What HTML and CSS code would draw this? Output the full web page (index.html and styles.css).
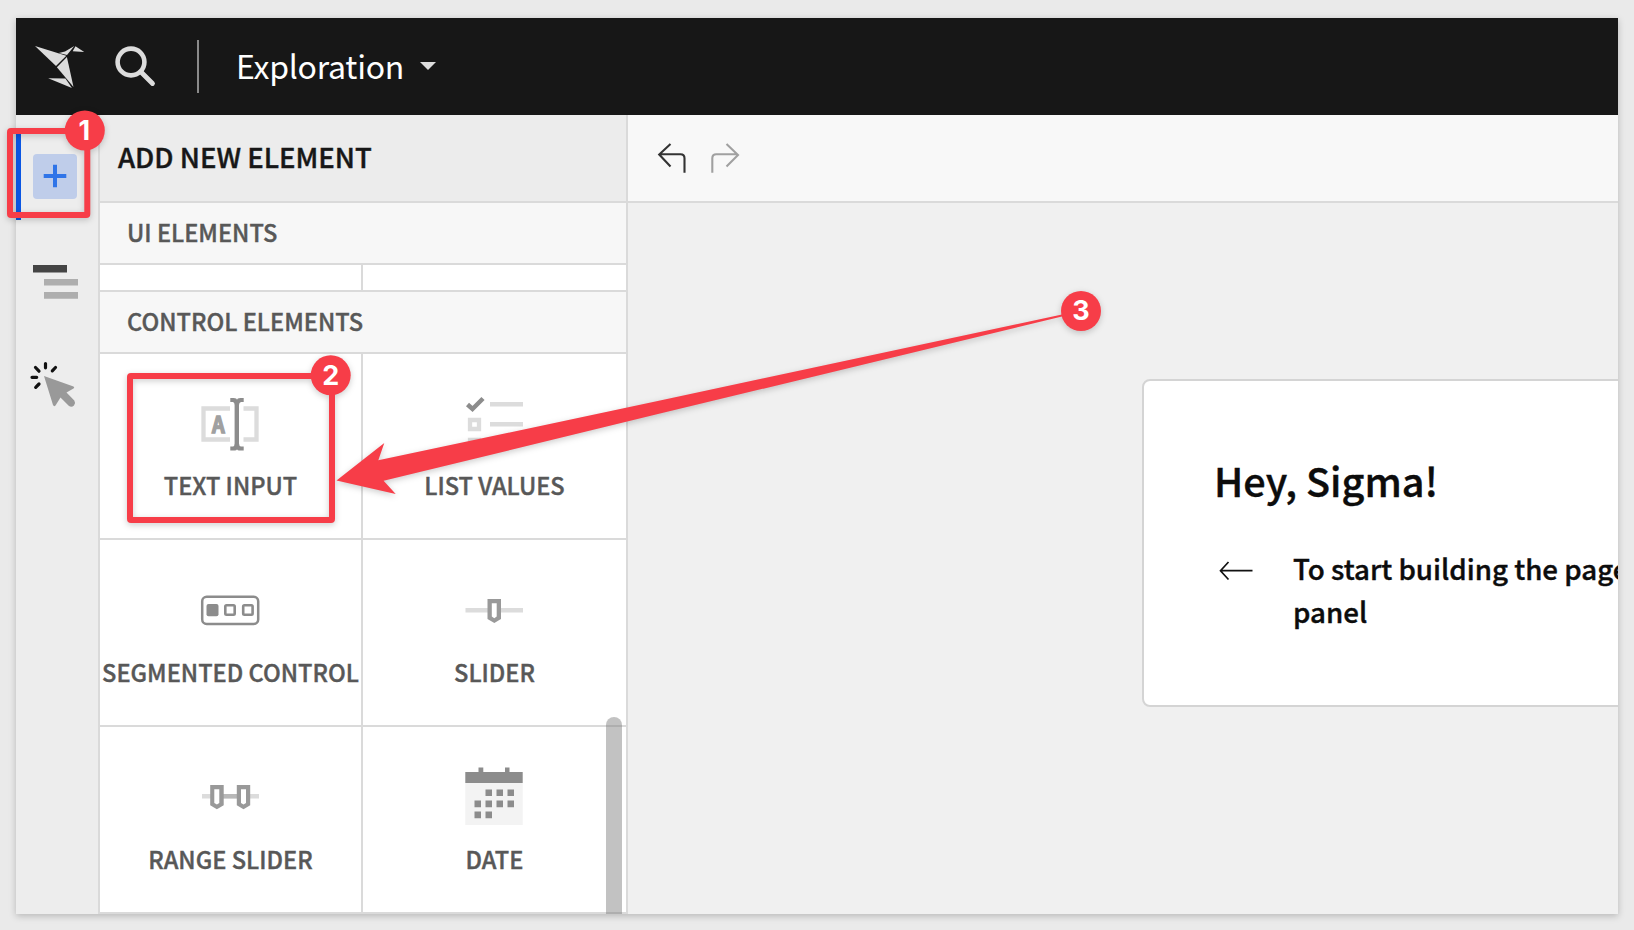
FILE: index.html
```html
<!DOCTYPE html>
<html lang="en">
<head>
<meta charset="utf-8">
<title>Exploration</title>
<link rel="stylesheet" href="styles.css">
</head>
<body>
<div class="window">
  <header class="topbar">
    <svg class="logo" width="52" height="46" viewBox="34 44 52 46" fill="#dcdcdc">
      <path d="M35 46L66.300 55.700 56 66z"/>
      <path d="M66.900 57L73.500 87 56.900 67.200z"/>
      <path d="M48.200 78.200L65.400 78.500 71.900 88z"/>
      <path d="M58.800 53L65 51.500 74.300 46 67 55z"/>
      <path d="M75.500 46.300L84.200 51.900 72.700 51.200z"/>
    </svg>
    <svg class="search" width="42" height="42" viewBox="114 45 42 42" fill="none" stroke="#dcdcdc" stroke-width="4.600">
      <circle cx="131" cy="62" r="13.400"/>
      <path d="M141 72L152.500 83.500" stroke-linecap="round" stroke-width="4.800"/>
    </svg>
    <span class="divider"></span>
    <span class="title">Exploration</span>
    <svg class="caret" width="16" height="8" viewBox="0 0 16 8"><path d="M0 0H16L8 8z" fill="#ddd"/></svg>
  </header>
  <div class="main">
    <nav class="rail">
      <div class="rail-active">
        <div class="plus"><svg width="24" height="24" viewBox="0 0 24 24"><path d="M12 .7V23.300M.7 12H23.300" stroke="#2f74e8" stroke-width="4"/></svg></div>
      </div>
      <svg class="outline" width="46" height="36" viewBox="0 0 46 36">
        <path d="M0 0H34V7.500H0z" fill="#444"/>
        <path d="M11 14H45V20.500H11zM11 27H45V33.700H11z" fill="#aeaeae"/>
      </svg>
      <svg class="pointer" width="48" height="48" viewBox="29 360 48 48">
        <path d="M44 376L73.500 386.500Q75 387.500 73.500 388.500L66.500 392.500 74.300 400.500Q76 403 74 405.500 71.500 407.800 69 406L60.500 397.500 55.500 405.500Q54 407 53 405z" fill="#999"/>
        <path d="M45.500 363.500V367.800M55.500 367.500L52.300 370.800M35.500 367.500L39 371.200M32 377.300H36.700M39 384L35.700 387.300" stroke="#111" stroke-width="3.200" stroke-linecap="round"/>
      </svg>
    </nav>
    <aside class="panel">
      <h2 class="panel-title">ADD NEW ELEMENT</h2>
      <h3 class="group">UI ELEMENTS</h3>
      <div class="stub"><span></span><span></span></div>
      <h3 class="group">CONTROL ELEMENTS</h3>
      <div class="grid">
        <div class="cell">
          <svg class="icon" width="60" height="60" viewBox="200 394 60 60">
            <path d="M230 408.500H203.500V439.500H230M243.500 408.500H256.500V439.500H243.500" fill="none" stroke="#dcdcdc" stroke-width="4.300"/>
            <path d="M230.300 398H233.500Q237 398 237 400 237 398 240.500 398H243.700V402H241Q239 402.500 239 405V443.500Q239 446 241 446.500H243.700V450.500H240.500Q237 450.500 237 449 237 450.500 233.500 450.500H230.300V446.500H233Q234.600 446 234.600 443.500V405Q234.600 402.500 233 402H230.300z" fill="#8c8c8c"/>
            <text class="glyph-a" transform="translate(218.300 432.500) scale(.86 1)" text-anchor="middle">A</text>
          </svg>
          <span class="label">TEXT INPUT</span>
        </div>
        <div class="cell">
          <svg class="icon" width="60" height="60" viewBox="464 394 60 60">
            <path d="M467.500 404.500L472.500 409 483 398.500" fill="none" stroke="#8c8c8c" stroke-width="4.500"/>
            <path d="M490 402H523V406.500H490zM490 422H523V426.500H490zM490 442H523V446.500H490z" fill="#dcdcdc"/>
            <path d="M470 420H479V429H470zM470 440H479V449H470z" fill="none" stroke="#dcdcdc" stroke-width="4.300"/>
          </svg>
          <span class="label">LIST VALUES</span>
        </div>
        <div class="cell">
          <svg class="icon" width="60" height="60" viewBox="200 581 60 60">
            <rect x="202.200" y="597.700" width="56" height="27.200" rx="4.500" fill="none" stroke="#8c8c8c" stroke-width="2.500"/>
            <rect x="206.500" y="605" width="12" height="12.200" rx="2" fill="#8c8c8c"/>
            <rect x="225.300" y="606.200" width="9.400" height="9.600" rx="1.200" fill="none" stroke="#8c8c8c" stroke-width="2.600"/>
            <rect x="243.200" y="606.200" width="9.400" height="9.600" rx="1.200" fill="none" stroke="#8c8c8c" stroke-width="2.600"/>
          </svg>
          <span class="label">SEGMENTED CONTROL</span>
        </div>
        <div class="cell">
          <svg class="icon" width="60" height="60" viewBox="464 581 60 60">
            <path d="M465.500 609H523V613.500H465.500z" fill="#dcdcdc"/>
            <path d="M487.500 600H501V620L494.300 624 487.500 620z" fill="#999"/>
            <path d="M491.800 604.200H496.700V617.500L494.300 619.200 491.800 617.500z" fill="#fff"/>
          </svg>
          <span class="label">SLIDER</span>
        </div>
        <div class="cell">
          <svg class="icon" width="60" height="60" viewBox="200 768 60 60">
            <path d="M202 795H259V799.500H202z" fill="#dcdcdc"/>
            <path d="M220 795H240V799.500H220z" fill="#b8b8b8"/>
            <path d="M210.200 786H223.700V806.300L216.900 810.300 210.200 806.300zM236.800 786H250.200V806.300L243.500 810.300 236.800 806.300z" fill="#999"/>
            <path d="M214.300 790.200H219.300V804L216.900 805.500 214.300 804zM241 790.200H246V804L243.500 805.500 241 804z" fill="#fff"/>
          </svg>
          <span class="label">RANGE SLIDER</span>
        </div>
        <div class="cell">
          <svg class="icon" width="60" height="60" viewBox="464 768 60 60">
            <path d="M465.300 784H522.700V826H465.300z" fill="#f3f3f3"/>
            <path d="M465.300 773H522.700V784H465.300zM478.500 768.500H483.300V774H478.500zM505 768.500H509.500V774H505zM485.500 790.500H492V797H485.500zM496.500 790.500H503V797H496.500zM507.500 790.500H514V797H507.500zM474.500 801.500H481V808.300H474.500zM485.500 801.500H492V808.300H485.500zM496.500 801.500H503V808.300H496.500zM507.500 801.500H514V808.300H507.500zM474.500 812.500H481V819.200H474.500zM485.500 812.500H492V819.200H485.500z" fill="#8c8c8c"/>
          </svg>
          <span class="label">DATE</span>
        </div>
      </div>
      <div class="scrollbar"></div>
    </aside>
    <section class="canvas">
      <div class="toolbar">
        <svg width="84" height="32" viewBox="656 143 84 32" fill="none" stroke-width="2.100">
          <path d="M670.500 144L659.200 154.500 670.500 166.500M659.500 154.200H680.500Q684.500 154.200 684.500 158.200V172.700" stroke="#333"/>
          <path d="M726.500 144L738 155 726.500 166.500M737.500 154.200H716.300Q712.300 154.200 712.300 158.200V172.700" stroke="#a0a0a0"/>
        </svg>
      </div>
      <div class="stage">
        <div class="card">
          <h1 class="card-title">Hey, Sigma!</h1>
          <div class="card-row">
            <svg class="back" width="34" height="20" viewBox="0 0 34 20" fill="none" stroke="#111" stroke-width="1.700"><path d="M9.500 1L1.500 9.700 9.500 18.500M1.500 9.700H33.500"/></svg>
            <p class="card-text">To start building the page<br>panel</p>
          </div>
        </div>
      </div>
    </section>
  </div>
</div>
<svg class="annotations" width="1634" height="930" viewBox="0 0 1634 930">
  <g class="marks">
    <rect x="10" y="131" width="77.300" height="84" rx="1"/>
    <rect x="130" y="376" width="202" height="144" rx="1"/>
    <path class="solid" d="M336.500 480.600L384.300 443 378.300 460.300 660 400.500 1062 314.400V316.600L660 413.600 383.600 480.800 395.700 494z"/>
    <circle class="solid" cx="84.800" cy="130.500" r="20"/>
    <circle class="solid" cx="330.700" cy="375.300" r="20"/>
    <circle class="solid" cx="1081" cy="311" r="20"/>
  </g>
  <g class="numbers">
    <text x="84.300" y="139.500">1</text>
    <text x="330.700" y="384.700">2</text>
    <text x="1081" y="320.200">3</text>
  </g>
</svg>
</body>
</html>
```
FILE: styles.css
```css
* { box-sizing: border-box; margin: 0; }
body {
  width: 1634px; height: 930px; padding: 18px 16px 16px;
  background: #eaeaea; overflow: hidden; position: relative;
  font-family: "Noto Sans CJK SC", "Noto Sans", sans-serif;
}
.window {
  width: 1602px; height: 896px; overflow: hidden;
  display: flex; flex-direction: column;
  box-shadow: 0 2px 7px rgba(0,0,0,.22);
}
.topbar { height: 97px; flex: none; background: #171717; display: flex; align-items: flex-start; color: #fff; }
.logo { margin: 26px 0 0 18px; flex: none; }
.search { margin: 27px 0 0 28px; flex: none; }
.divider { width: 2px; height: 53px; margin: 22px 0 0 41px; background: #8a8a8a; }
.title { font-size: 32px; line-height: 48px; margin: 23px 0 0 37px; width: 168px; white-space: nowrap; letter-spacing: -.25px; }
.caret { margin: 44px 0 0 16px; }
.main { flex: 1; display: flex; min-height: 0; }
.rail { width: 82px; flex: none; background: #ededed; padding-top: 17px; }
.rail-active { height: 88px; border-left: 5px solid #0b57e3; padding: 22px 0 0 12px; }
.plus { width: 44px; height: 44.500px; border-radius: 4px; background: #bfcdea; display: flex; align-items: center; justify-content: center; }
.outline { display: block; margin: 44.500px 0 0 17px; }
.pointer { display: block; margin: 59.500px 0 0 13px; }
.panel { width: 530px; flex: none; border: solid #dadada; border-width: 0 2px; background: #fff; position: relative; }
.panel-title, .group, .label, .card-title, .card-text { font-weight: 500; white-space: nowrap; -webkit-text-stroke: .4px currentColor; }
.panel-title { height: 88px; border-bottom: 2px solid #dadada; background: #ececec; color: #171717; font-size: 27.500px; line-height: 82px; padding-left: 18px; }
.group { height: 62px; border-bottom: 2px solid #dadada; background: #f7f7f7; color: #585858; font-size: 23.600px; line-height: 58px; padding-left: 27px; }
.stub { height: 27px; border-bottom: 2px solid #dadada; display: grid; grid-template-columns: 263px 1fr; }
.stub span:first-child { border-right: 2px solid #dadada; }
.grid { display: grid; grid-template-columns: 263px 263px; grid-template-rows: 186px 187px 187px; }
.cell { border-bottom: 2px solid #dadada; display: flex; flex-direction: column; align-items: center; padding-top: 40px; }
.cell:nth-child(odd) { border-right: 2px solid #dadada; }
.icon { flex: none; margin-right: 2px; }
.glyph-a { font: 700 23px "Noto Sans CJK SC", sans-serif; fill: #a0a0a0; stroke: #a0a0a0; stroke-width: 1.400px; }
.label { margin-top: 15px; font-size: 23.600px; line-height: 35px; color: #585858; }
.cell:nth-child(-n+2) .label { margin-top: 14px; }
.scrollbar { position: absolute; right: 4px; bottom: 0; width: 16px; height: 197px; border-radius: 8px 8px 0 0; background: rgba(120,120,120,.45); }
.canvas { flex: 1; min-width: 0; background: #f0f0f0; display: flex; flex-direction: column; }
.toolbar { height: 88px; flex: none; border-bottom: 2px solid #dadada; background: #f8f8f8; padding: 28px 0 0 28px; }
.stage { flex: 1; padding: 176px 0 0 514px; }
.card { width: 700px; height: 328px; border: 2px solid #d4d4d4; border-radius: 8px; background: #fff; padding: 69px 0 0 70px; color: #0c0c0c; }
.card-title { font-size: 39.600px; line-height: 60px; }
.card-row { display: flex; margin-top: 36.500px; }
.back { margin: 14.500px 40px 0 5px; flex: none; }
.card-text { font-size: 27.700px; line-height: 43px; }
.annotations { position: absolute; left: 0; top: 0; }
.marks { filter: drop-shadow(0 2px 3px rgba(0,0,0,.2)); }
.marks rect { fill: none; stroke: #f73d48; stroke-width: 6; }
.solid { fill: #f73d48; }
.numbers { font: 700 27px Inter, sans-serif; fill: #fff; text-anchor: middle; }
```
